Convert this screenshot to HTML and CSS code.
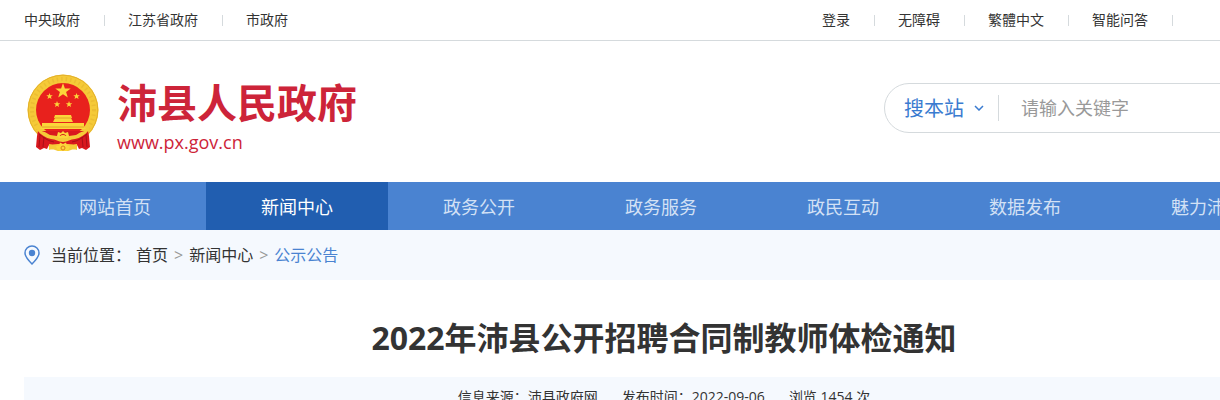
FILE: index.html
```html
<!DOCTYPE html>
<html lang="zh-CN">
<head>
    <meta charset="UTF-8">
    <meta name="viewport" content="width=device-width, initial-scale=1.0">
    <title>2022年沛县公开招聘合同制教师体检通知</title>
    <link rel="stylesheet" href="styles.css">
</head>
<body>

<div class="top-bar">
    <div class="container top-inner">
        <ul class="top-links">
            <li><a href="#">中央政府</a></li>
            <li><a href="#">江苏省政府</a></li>
            <li><a href="#">市政府</a></li>
        </ul>
        <ul class="top-links top-tools">
            <li><a href="#">登录</a></li>
            <li><a href="#">无障碍</a></li>
            <li><a href="#">繁體中文</a></li>
            <li><a href="#">智能问答</a></li>
        </ul>
    </div>
</div>

<header class="container header">
    <a class="logo" href="#">
        <svg class="emblem" viewBox="0 0 72 78" aria-hidden="true">
            <circle cx="36" cy="36" r="35.500" fill="#f5ca38"/>
            <circle cx="36" cy="36" r="31" fill="none" stroke="#dca529" stroke-width="4" stroke-dasharray="1.500 3" opacity=".35"/>
            <circle cx="36" cy="36" r="34.800" fill="none" stroke="#e3b02c" stroke-width="1"/>
            <path d="M9 54c3 5 7 9 12 12h30c5-3 9-7 12-12l-6-6H15z" fill="#f5ca38"/>
            <circle cx="36" cy="36" r="27" fill="#e8211d"/>
            <g fill="#fbd63a">
                <path d="M36 9l1.900 5.400 5.800.1-4.600 3.500 1.700 5.500-4.800-3.300-4.800 3.300 1.700-5.500-4.600-3.500 5.800-.1z"/>
                <path d="M22.500 19l.9 2.200 2.400.1-1.900 1.500.7 2.300-2.100-1.300-2 1.300.7-2.300-1.900-1.500 2.400-.1z"/>
                <path d="M49.500 19l.9 2.200 2.400.1-1.900 1.500.7 2.300-2.100-1.300-2 1.300.7-2.300-1.900-1.500 2.400-.1z"/>
                <path d="M30 27l.9 2.200 2.400.1-1.900 1.500.7 2.300-2.100-1.300-2 1.300.7-2.300-1.900-1.500 2.400-.1z"/>
                <path d="M42 27l.9 2.200 2.400.1-1.900 1.500.7 2.300-2.100-1.300-2 1.300.7-2.300-1.900-1.500 2.400-.1z"/>
                <path d="M28 41h16l1 3h-1l2 4H26l2-4h-1z"/>
                <path d="M15 49h42v4l2 2H13l2-2z"/>
            </g>
            <path d="M28 44h16M15 53h42" stroke="#dd9426" stroke-width=".8"/>
            <path d="M11 57h50l1 5 1 11-4 3-4-2-3 1-2-4H22l-2 4-3-1-4 2-4-3 1-11z" fill="#d9181e"/>
            <path d="M13 61l-1 12M17 63l-1 10M59 61l1 12M55 63l1 10M12 60c5 4 9 7 15 8M60 60c-5 4-9 7-15 8" fill="none" stroke="#a80f18" stroke-width="1"/>
            <path d="M10 56c6 1 8 2 13 5l7 1c3-1 9-1 12 0l7-1c5-3 7-4 13-5-4 5-9 8-14 9-5 0-7 3-12 3s-7-3-12-3c-5-1-10-4-14-9z" fill="#f5ca38"/>
            <path d="M30 62l1-4 3 1 2-2 2 2 3-1 1 4-2 2h-8z" fill="#fbd63a"/>
            <path d="M33 62c1-2 5-2 6 0" fill="none" stroke="#d9181e" stroke-width="1"/>
            <path d="M22 70c4 1 6 0 9 0h10c3 0 5 1 9 0v6c-4-1-6 0-9 1H31c-3-1-5-2-9-1z" fill="#f5ca38"/>
            <path d="M30 75l-1-3 3-.5 1-3 3 1.500 3-1.500 1 3 3 .5-1 3-2 2h-8z" fill="#fbd63a"/>
            <circle cx="36" cy="74" r="2" fill="none" stroke="#dd7a20" stroke-width="1"/>
        </svg>
        <span class="logo-text">
            <strong>沛县人民政府</strong>
            <span>www.px.gov.cn</span>
        </span>
    </a>
    <form class="search">
        <div class="search-scope">
            <select aria-label="搜索范围">
                <option>搜本站</option>
            </select>
            <svg viewBox="0 0 10 6" aria-hidden="true"><path d="M1 1l4 4 4-4" fill="none" stroke="#3a7bd0" stroke-width="1.500"/></svg>
        </div>
        <input type="text" placeholder="请输入关键字" aria-label="请输入关键字">
    </form>
</header>

<nav class="main-nav">
    <div class="container nav-inner">
        <a href="#">网站首页</a>
        <a href="#" class="active">新闻中心</a>
        <a href="#">政务公开</a>
        <a href="#">政务服务</a>
        <a href="#">政民互动</a>
        <a href="#">数据发布</a>
        <a href="#">魅力沛县</a>
    </div>
</nav>

<div class="location">
    <div class="container location-inner">
        <svg class="pin" viewBox="0 0 16 20" aria-hidden="true">
            <path d="M8 19C4.500 15.500 1 12 1 8a7 7 0 0 1 14 0c0 4-3.500 7.500-7 11z" fill="none" stroke="#4a83d1" stroke-width="1.500"/>
            <circle cx="8" cy="8" r="3.200" fill="#4a83d1"/>
        </svg>
        <span class="location-label">当前位置：</span>
        <a href="#">首页</a>
        <span class="sep">&gt;</span>
        <a href="#">新闻中心</a>
        <span class="sep">&gt;</span>
        <a href="#" class="current">公示公告</a>
    </div>
</div>

<main class="container article">
    <h1>2022年沛县公开招聘合同制教师体检通知</h1>
    <div class="article-info">
        <span>信息来源：沛县政府网</span>
        <span>发布时间：2022-09-06</span>
        <span>浏览 1454 次</span>
    </div>
</main>

</body>
</html>
```

FILE: styles.css
```css
:root {
    --blue: #4a83d1;
    --blue-dark: #215eb0;
    --red: #cd2439;
    --text: #333333;
    --line: #d5dadd;
    --pale: #f5f9fe;
}
* { box-sizing: border-box; }
html { overflow: hidden; }
body {
    margin: 0;
    min-width: 1328px;
    font-family: "Open Sans", "Noto Sans CJK SC", sans-serif;
    font-size: 14px;
    color: var(--text);
    background: #fff;
}
a { color: inherit; text-decoration: none; }
.container {
    max-width: 1328px;
    margin: 0 auto;
    padding: 0 24px;
}

/* top bar */
.top-bar { border-bottom: 1px solid var(--line); }
.top-inner { display: flex; justify-content: space-between; }
.top-links {
    display: flex;
    margin: 0;
    padding: 0;
    list-style: none;
    line-height: 40px;
}
.top-links li { display: flex; align-items: center; }
.top-links li::after {
    content: "";
    width: 1px;
    height: 11px;
    margin: 0 23px 0 24px;
    background: var(--line);
}
.top-links li:last-child::after { display: none; }
.top-tools { padding-right: 108px; }
.top-tools li:last-child::after { display: block; }

/* header */
.header {
    display: flex;
    justify-content: space-between;
    padding-top: 33px;
    padding-bottom: 30px;
}
.logo { display: flex; color: var(--red); }
.emblem { width: 72px; height: 78px; margin: 0 18px 0 3px; }
.logo-text { display: flex; flex-direction: column; }
.logo-text strong { font-size: 40px; line-height: 58px; }
.logo-text span { font-size: 18px; line-height: 20px; }
.search {
    display: flex;
    align-items: center;
    width: 420px;
    height: 50px;
    margin-top: 9px;
    padding-left: 19px;
    border: 1px solid var(--line);
    border-radius: 25px;
}
.search-scope {
    display: flex;
    align-items: center;
    height: 26px;
    border-right: 1px solid var(--line);
}
.search select {
    width: 70px;
    padding: 0;
    border: none;
    background: none;
    appearance: none;
    color: #3a7bd0;
    font-family: inherit;
    font-size: 20px;
}
.search-scope svg { width: 10px; height: 6px; margin-right: 14px; }
.search input {
    flex: 1;
    min-width: 0;
    padding: 0 22px;
    border: none;
    outline: none;
    background: none;
    font-family: inherit;
    font-size: 18px;
}
.search input::placeholder { color: #999; }

/* nav */
.main-nav { background: var(--blue); }
.nav-inner { display: flex; }
.nav-inner a {
    width: 182px;
    padding-top: 2px;
    line-height: 46px;
    text-align: center;
    font-size: 18px;
    color: #d3e1f5;
}
.nav-inner .active { background: var(--blue-dark); color: #fff; }

/* breadcrumb */
.location { background: var(--pale); }
.location-inner {
    display: flex;
    align-items: center;
    font-size: 16px;
    line-height: 50px;
}
.pin { width: 16px; height: 20px; margin-right: 11px; }
.location-label { margin-right: 5px; }
.sep { margin: 0 6px; color: #999; }
.current { color: var(--blue); }

/* article */
.article h1 {
    margin: 0;
    padding: 34px 0 15px;
    font-size: 32px;
    line-height: 48px;
    text-align: center;
}
.article-info {
    display: flex;
    justify-content: center;
    gap: 24px;
    line-height: 40px;
    background: var(--pale);
}
```
